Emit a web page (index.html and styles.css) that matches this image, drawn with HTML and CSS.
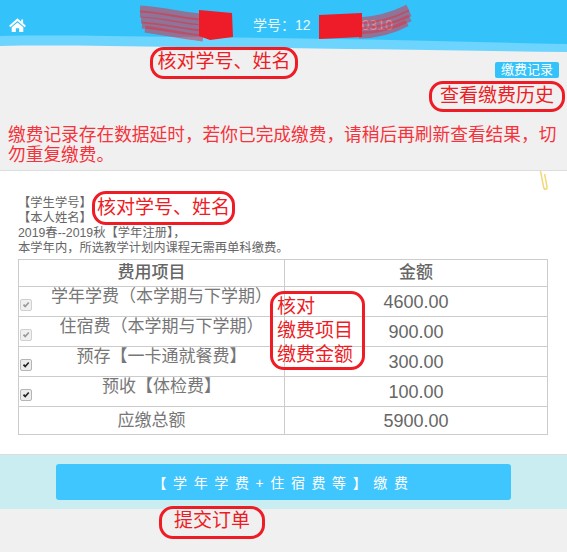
FILE: index.html
```html
<!DOCTYPE html>
<html lang="zh-CN">

<head>
  <meta charset="UTF-8" />
  <meta name="viewport" content="width=device-width, initial-scale=1.0" />
  <title>缴费</title>
  <link rel="stylesheet" href="styles.css">
</head>

<body>
  <div class="page">
    <header class="top-bar">
      <svg class="wave" viewBox="0 0 567 53" preserveAspectRatio="none">
        <path d="M0,0H567V52C430,50 300,48 180,47C110,46 50,45 0,46Z" fill="#6dd5fd" />
        <path d="M0,0H567V44C440,41 300,38 180,37C110,36 50,35 0,36Z" fill="#33c3fa" />
      </svg>
      <svg class="home" viewBox="0 0 18 15">
        <path d="M9,0.4 L13,3.9 V1.6 H15 V5.7 L18,8.3 L16.7,9.8 L9,3.1 L1.3,9.8 L0,8.3Z" fill="#fff" />
        <path d="M9,4.7 L15.2,10 V15 H10.8 V11 H7.2 V15 H2.8 V10Z" fill="#fff" />
      </svg>
      <div class="student-no">学号：12<span class="masked"></span>0310</div>
      <svg class="scribble" viewBox="0 0 567 53">
        <g fill="none" stroke="#dc3346" stroke-opacity="0.55" stroke-width="7">
          <path d="M140,9C165,10 185,17 203,17" />
          <path d="M140,14C165,15 185,22 203,22" />
          <path d="M141,20C165,21 185,27 203,28" />
          <path d="M142,25C165,27 185,32 203,33" />
          <path d="M145,29C165,32 185,36 203,38" />
          <path d="M359,21C380,20 396,14 408,8" />
          <path d="M359,26C380,25 398,19 410,13" />
          <path d="M359,31C380,30 398,24 410,18" />
          <path d="M359,35C380,35 396,29 407,23" />
        </g>
        <path d="M199,10 L232,13 L233,37 L210,40 L199,36Z" fill="#ed1c28" />
        <path d="M319,15 L362,13 L362,37 L319,39Z" fill="#ed1c28" />
      </svg>
    </header>

    <section class="notice-area">
      <div class="history-row"><span class="history-btn">缴费记录</span></div>
      <p class="notice">缴费记录存在数据延时，若你已完成缴费，请稍后再刷新查看结果，切勿重复缴费。</p>
    </section>

    <section class="order">
      <div class="order-info">
        <div>【学生学号】</div>
        <div>【本人姓名】</div>
        <div>2019春--2019秋【学年注册】，</div>
        <div>本学年内，所选教学计划内课程无需再单科缴费。</div>
      </div>
      <table class="fee-table">
        <tr class="head">
          <th>费用项目</th>
          <th>金额</th>
        </tr>
        <tr>
          <td>
            <div class="fee-item">
              <span class="check locked"><svg viewBox="0 0 12 12"><path d="M2.2,6.4 L3.8,4.9 L5.1,6.3 L8.6,2.3 L10,3.7 L5.1,9.4Z" /></svg></span>
              <span class="fee-name">学年学费（本学期与下学期）</span>
            </div>
          </td>
          <td class="amount">4600.00</td>
        </tr>
        <tr>
          <td>
            <div class="fee-item">
              <span class="check locked"><svg viewBox="0 0 12 12"><path d="M2.2,6.4 L3.8,4.9 L5.1,6.3 L8.6,2.3 L10,3.7 L5.1,9.4Z" /></svg></span>
              <span class="fee-name">住宿费（本学期与下学期）</span>
            </div>
          </td>
          <td class="amount">900.00</td>
        </tr>
        <tr>
          <td>
            <div class="fee-item">
              <span class="check"><svg viewBox="0 0 12 12"><path d="M2.2,6.4 L3.8,4.9 L5.1,6.3 L8.6,2.3 L10,3.7 L5.1,9.4Z" /></svg></span>
              <span class="fee-name">预存【一卡通就餐费】</span>
            </div>
          </td>
          <td class="amount">300.00</td>
        </tr>
        <tr>
          <td>
            <div class="fee-item">
              <span class="check"><svg viewBox="0 0 12 12"><path d="M2.2,6.4 L3.8,4.9 L5.1,6.3 L8.6,2.3 L10,3.7 L5.1,9.4Z" /></svg></span>
              <span class="fee-name">预收【体检费】</span>
            </div>
          </td>
          <td class="amount">100.00</td>
        </tr>
        <tr class="total">
          <td>应缴总额</td>
          <td class="amount">5900.00</td>
        </tr>
      </table>
      <svg class="clip" viewBox="0 0 9 20">
        <path d="M1.5,0 L4.6,16 C5.2,19.4 8.6,19 8,15.6 L5.6,3" fill="none" stroke="#f4d67a" stroke-width="1.5" />
      </svg>
    </section>

    <section class="submit-bar">
      <button class="submit-btn">【学年学费+住宿费等】缴费</button>
    </section>

    <!-- red marks drawn over the page -->
    <div class="mark mark-name-top">核对学号、姓名</div>
    <div class="mark mark-history">查看缴费历史</div>
    <div class="mark mark-name-info">核对学号、姓名</div>
    <div class="mark mark-fee">核对<br>缴费项目<br>缴费金额</div>
    <div class="mark mark-submit">提交订单</div>
  </div>
</body>

</html>
```

FILE: styles.css
```css
html,
body {
  margin: 0;
  background-color: #f0f0f0;
}

.page {
  position: relative;
  height: 552px;
  overflow: hidden;
  font-family: "Liberation Sans", "Noto Sans CJK SC", sans-serif;
  color: #666;
}

.top-bar {
  position: relative;
  display: flex;
  align-items: flex-start;
  height: 53px;
  padding-left: 9px;
  box-sizing: border-box;
}

.wave,
.scribble {
  position: absolute;
  top: 0;
  left: 0;
  width: 100%;
  height: 53px;
}

.scribble {
  filter: blur(0.6px);
}

.home {
  position: relative;
  width: 17px;
  height: 14px;
  margin-top: 18px;
  flex-shrink: 0;
}

.student-no {
  position: relative;
  display: flex;
  margin-left: 227px;
  margin-top: 16px;
  font-size: 14px;
  line-height: 18px;
  color: #e8f8ff;
}

.masked {
  display: inline-block;
  width: 51px;
}

.notice-area {
  height: 118px;
  padding-top: 9px;
  box-sizing: border-box;
  border-bottom: 1px solid #ddd;
}

.history-row {
  display: flex;
  justify-content: flex-end;
  padding-right: 8px;
}

.history-btn {
  background-color: #33c3fa;
  border-radius: 2px;
  color: #fff;
  font-size: 13px;
  line-height: 16px;
  padding: 0 6px;
}

.notice {
  margin: 47px 8px 0;
  font-size: 17.7px;
  line-height: 20px;
  color: #f5333c;
}

.order {
  position: relative;
  height: 284px;
  padding: 25px 18px 0;
  box-sizing: border-box;
  background-color: #fff;
  border-bottom: 1px solid #ddd;
}

.order-info {
  font-size: 12.3px;
  line-height: 15px;
  color: #666;
}

.fee-table {
  width: 530px;
  margin-top: 3px;
  border-collapse: collapse;
  table-layout: fixed;
  font-size: 17px;
  color: #777;
}

.fee-table th,
.fee-table td {
  border: 1px solid #ccc;
  padding: 0;
  height: 29px;
  text-align: center;
  line-height: 20px;
}

.fee-table th:first-child {
  width: 265px;
}

.fee-table th {
  color: #666;
  font-weight: 500;
}

.fee-table .head th {
  height: 26px;
}

.fee-table .total td {
  height: 27px;
}

.fee-table .amount {
  font-size: 18px;
  color: #666;
}

.fee-item {
  display: grid;
  grid-template-columns: 20px 1fr;
  height: 29px;
}

.check {
  align-self: end;
  width: 12px;
  height: 12px;
  margin-left: 1px;
  margin-bottom: 5px;
  border: 1px solid #b5b5b5;
  border-radius: 2px;
  background-color: #ececec;
  box-sizing: border-box;
  fill: #222;
}

.check svg {
  display: block;
  width: 10px;
  height: 10px;
}

.check.locked {
  border-color: #d0d0d0;
  background-color: #f0f0f0;
  fill: #999;
}

.clip {
  position: absolute;
  top: 0;
  left: 539px;
  width: 9px;
  height: 20px;
}

.submit-bar {
  padding: 9px 56px;
  background-color: #c9edf0;
}

.submit-btn {
  display: block;
  width: 100%;
  height: 36px;
  padding: 0;
  border: none;
  border-radius: 3px;
  background-color: #3fc6ff;
  color: #fff;
  font-family: inherit;
  font-size: 14px;
  letter-spacing: 6.6px;
}

.mark {
  position: absolute;
  box-sizing: border-box;
  border: 3px solid #ee1c25;
  border-radius: 14px;
  color: #ee1c25;
  font-size: 19px;
  line-height: 24px;
  white-space: nowrap;
  text-align: center;
}

.mark-name-top {
  left: 150px;
  top: 47px;
  width: 148px;
  height: 32px;
}

.mark-history {
  left: 429px;
  top: 81px;
  width: 136px;
  height: 31px;
}

.mark-name-info {
  left: 92px;
  top: 191px;
  width: 143px;
  height: 34px;
  line-height: 27px;
}

.mark-fee {
  left: 270px;
  top: 291px;
  width: 95px;
  height: 79px;
  padding-top: 1px;
  text-align: left;
  padding-left: 4px;
}

.mark-submit {
  left: 159px;
  top: 506px;
  width: 106px;
  height: 33px;
}
```
